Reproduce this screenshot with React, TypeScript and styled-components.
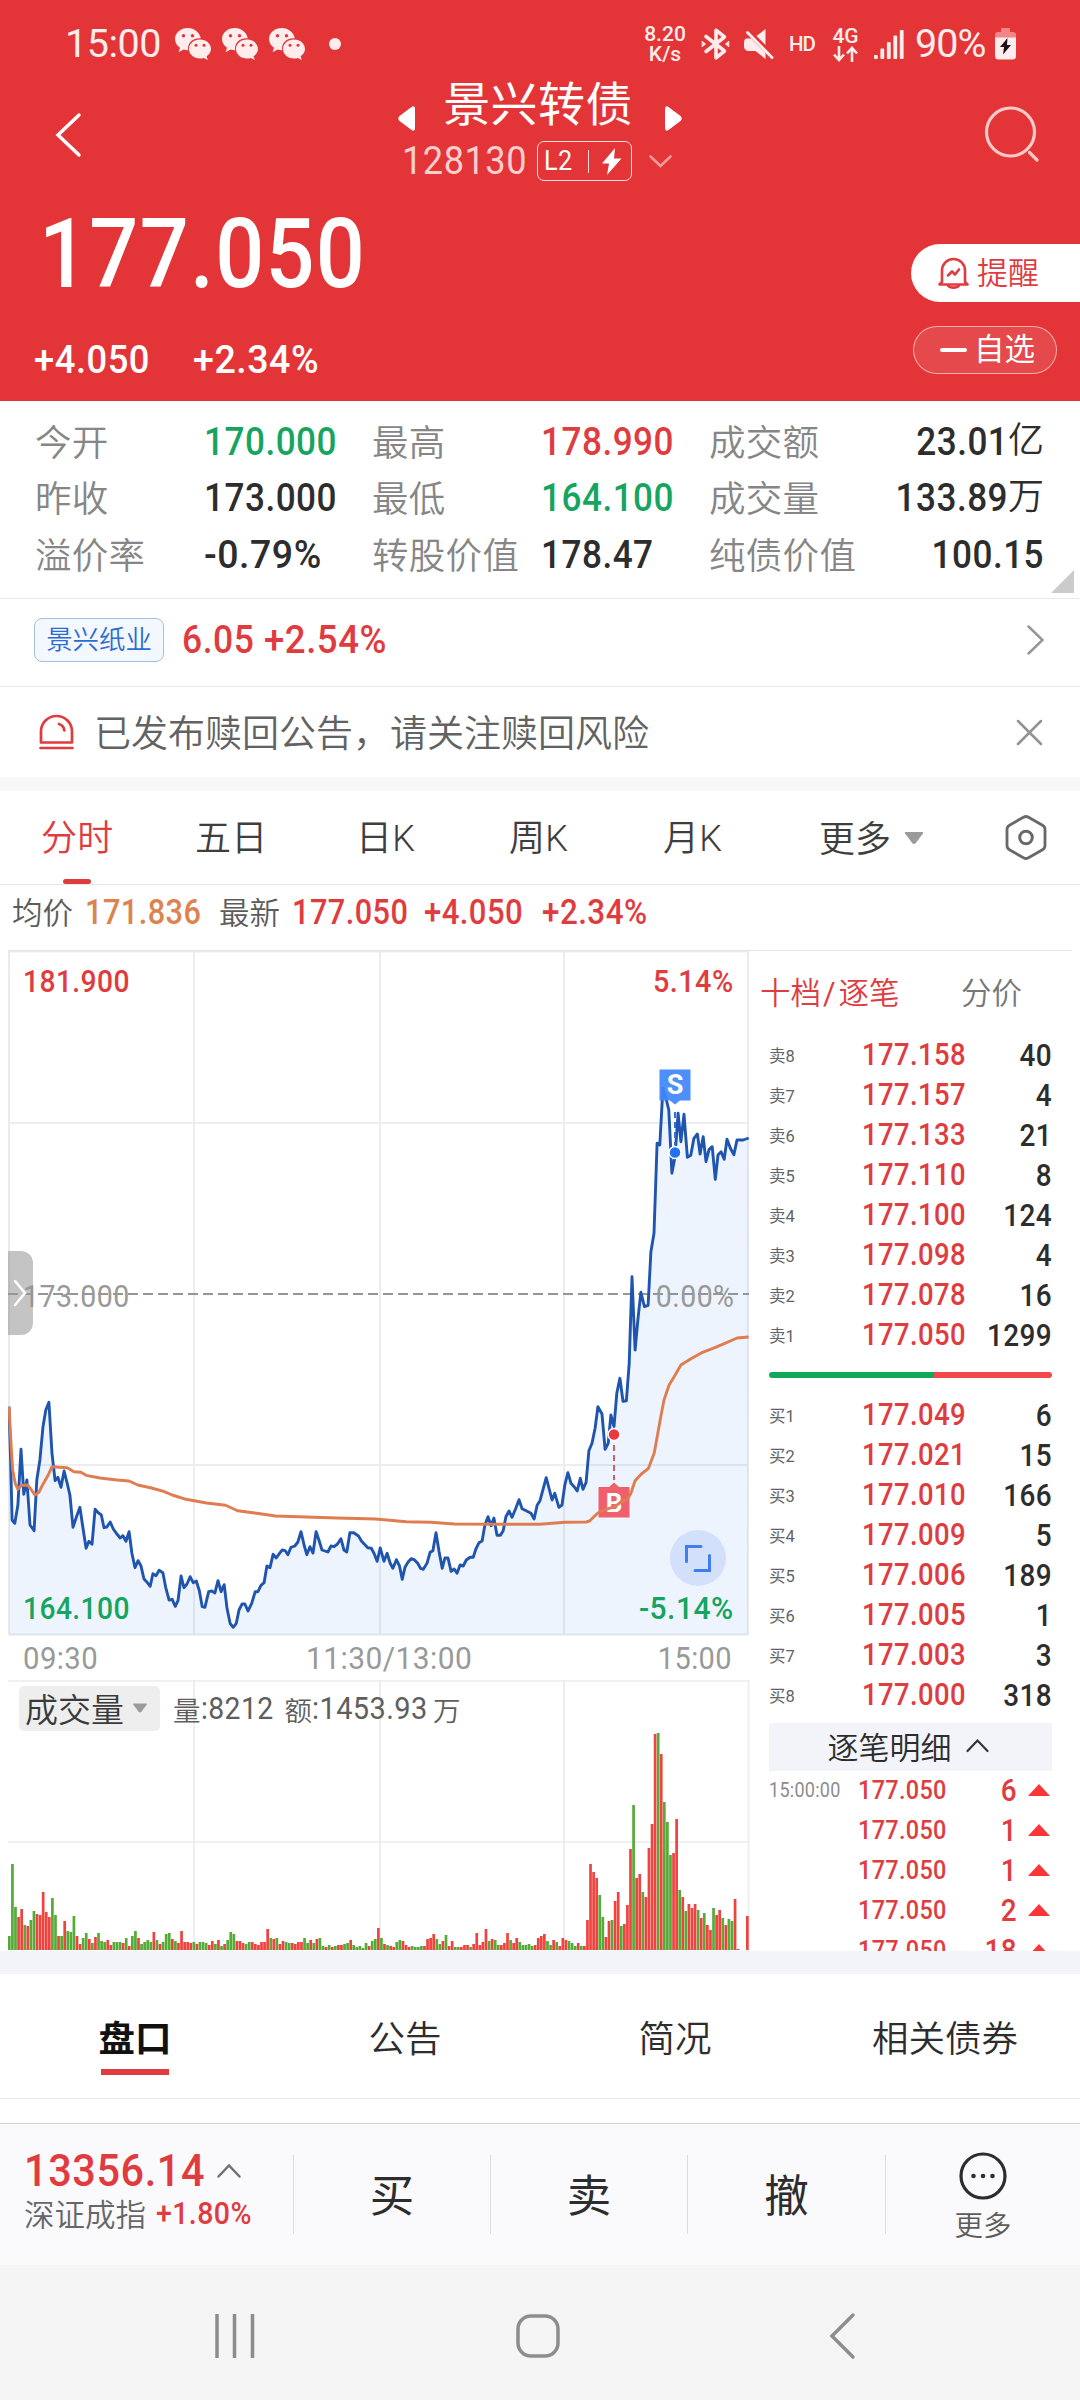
import React from "react";
import styled, { createGlobalStyle } from "styled-components";

const RED = "#e03c40";
const GREEN = "#17a45f";
const INK = "#2d2d2d";

const Global = createGlobalStyle`
  * { box-sizing: border-box; }
  body {
    margin: 0;
    background: #fff;
    font-family: Roboto, "Noto Sans CJK SC", sans-serif;
    font-weight: 350;
  }
  svg { display: block; flex: none; overflow: visible; }
`;

const Screen = styled.div`
  width: 1080px;
  height: 2400px;
  display: flex;
  flex-direction: column;
  overflow: hidden;
  background: #fff;
`;

/* Condensed figures: the box keeps its own width, the glyphs are narrowed inside it. */
const Num = styled.span<{ $size: number; $w?: number; $color?: string; $right?: boolean; $weight?: number; $sx?: number }>`
  display: inline-flex;
  justify-content: ${(p) => (p.$right ? "flex-end" : "flex-start")};
  flex: none;
  width: ${(p) => (p.$w ? p.$w + "px" : "auto")};
  font-size: ${(p) => p.$size}px;
  font-weight: ${(p) => p.$weight ?? 500};
  color: ${(p) => p.$color ?? "inherit"};
  letter-spacing: 0.0145em;
  line-height: 1;
  white-space: pre;
  transform: scaleX(${(p) => p.$sx ?? 0.9});
  transform-origin: ${(p) => (p.$right ? "right" : "left")} center;
`;

/* ---------- header ---------- */
const Header = styled.header`
  height: 401px;
  flex: none;
  background: #e33537;
  color: #fff;
  display: flex;
  flex-direction: column;
`;
const StatusBar = styled.div`
  height: 80px;
  flex: none;
  display: flex;
  align-items: center;
  justify-content: space-between;
  padding: 8px 64px 0 65px;
  color: #ffecec;
`;
const StatusGroup = styled.div<{ $gap: number }>`
  display: flex;
  align-items: center;
  gap: ${(p) => p.$gap}px;
`;
const Clock = styled.span`
  font-size: 39.5px;
  font-weight: 400;
  line-height: 1;
  width: 99px;
  letter-spacing: -0.5px;
`;
const StatusDot = styled.i`
  width: 12px;
  height: 12px;
  border-radius: 50%;
  background: #ffecec;
  margin-left: 13px;
`;
const Stack = styled.div<{ $w: number }>`
  width: ${(p) => p.$w}px;
  display: flex;
  flex-direction: column;
  align-items: center;
  font-size: 21px;
  font-weight: 500;
  line-height: 20px;
`;
const Hd = styled.span`
  width: 28px;
  font-size: 20.5px;
  font-weight: 500;
  letter-spacing: -1px;
`;
const Battery = styled.span`
  width: 72px;
  margin-left: -4px;
  font-size: 39.5px;
  font-weight: 400;
  line-height: 1;
  letter-spacing: -1px;
`;
const TitleBar = styled.div`
  height: 112px;
  display: flex;
  justify-content: space-between;
  padding: 0 40px 0 55px;
`;
const TitleBlock = styled.div`
  width: 287px;
  margin-left: 18px;
  display: flex;
  flex-direction: column;
`;
const TitleLine = styled.div`
  height: 50px;
  display: flex;
  justify-content: space-between;
  padding: 0 3px 0 0;
`;
const Title = styled.h1`
  margin: 0 4px 0 0;
  font-size: 47px;
  font-weight: 400;
  line-height: 50px;
  letter-spacing: 0.4px;
`;
const CodeLine = styled.div`
  height: 40px;
  margin-top: 11px;
  padding-left: 4px;
  display: flex;
  align-items: center;
  color: #fccfcf;
`;
const LevelBadge = styled.div`
  width: 95px;
  height: 40px;
  margin-right: 17px;
  padding: 0 9px 0 6px;
  border: 1.5px solid #ffdede;
  border-radius: 7px;
  display: flex;
  align-items: center;
  justify-content: space-between;
  color: #fff;
  font-size: 28px;
  font-weight: 500;
`;
const BadgeRule = styled.i`
  width: 1px;
  height: 23px;
  background: #ffdede;
`;
const BackSlot = styled.div`
  padding-top: 33px;
`;
const SearchSlot = styled.div`
  padding-top: 26px;
`;
const Quote = styled.div`
  flex: 1;
  display: flex;
  justify-content: space-between;
`;
const Price = styled.div`
  display: flex;
  flex-direction: column;
  padding: 14px 0 0 34px;
`;
const PriceLine = styled.div`
  display: flex;
  padding-left: 5px;
`;
const Changes = styled.div`
  display: flex;
  margin-top: 37px;
`;
const Actions = styled.div`
  width: 169px;
  padding-top: 52px;
  display: flex;
  flex-direction: column;
`;
const RemindButton = styled.button`
  height: 58px;
  border: 0;
  padding: 0 0 0 27px;
  border-radius: 29px 0 0 29px;
  background: #fff;
  color: ${RED};
  display: flex;
  align-items: center;
  gap: 8px;
  font: 350 31px/1 Roboto, "Noto Sans CJK SC", sans-serif;
`;
const WatchButton = styled.button`
  width: 144px;
  height: 48px;
  margin: 24px 0 0 2px;
  border: 1px solid rgba(255, 255, 255, 0.55);
  border-radius: 24px;
  background: rgba(255, 255, 255, 0.1);
  color: #fff;
  display: flex;
  align-items: center;
  gap: 7px;
  padding: 0 0 0 26px;
  font: 400 30.5px/1 Roboto, "Noto Sans CJK SC", sans-serif;
`;
const Dash = styled.i`
  width: 27px;
  height: 3.5px;
  border-radius: 2px;
  background: #fff;
`;

/* ---------- key figures ---------- */
const Stats = styled.section`
  position: relative;
  height: 198px;
  flex: none;
  display: grid;
  grid-template-columns: 169px 168px 169px 168px 160px 175px;
  grid-auto-rows: 56.3px;
  align-items: center;
  padding: 13px 0 0 35px;
  border-bottom: 1.5px solid #e9e9e9;
`;
const StatLabel = styled.span`
  padding-bottom: 3px;
  font-size: 36.5px;
  color: #868686;
  white-space: nowrap;
  letter-spacing: 0.3px;
`;
const StatValue = styled.span<{ $right?: boolean }>`
  padding-top: 1px;
  display: flex;
  align-items: center;
  justify-content: ${(p) => (p.$right ? "flex-end" : "flex-start")};
`;
const Unit = styled.span`
  padding-bottom: 4px;
  font-size: 36px;
  line-height: 48px;
  color: ${INK};
`;
const Corner = styled.i`
  position: absolute;
  right: 6px;
  bottom: 5px;
  border-left: 23px solid transparent;
  border-bottom: 23px solid #cbcbcb;
`;

/* ---------- linked stock + notice ---------- */
const LinkRow = styled.section`
  height: 88px;
  flex: none;
  display: flex;
  align-items: center;
  padding: 0 36px 5px 34px;
  border-bottom: 1.5px solid #e9e9e9;
`;
const StockTag = styled.span`
  width: 130px;
  height: 44px;
  margin-right: 18px;
  border: 1.5px solid #a4c0e0;
  border-radius: 8px;
  background: #f3f8fe;
  color: #2d6cd2;
  font-size: 26.4px;
  line-height: 42px;
  text-align: center;
`;
const Spacer = styled.span`
  flex: 1;
`;
const Notice = styled.section`
  height: 90px;
  flex: none;
  display: flex;
  align-items: center;
  padding: 0 38px 0 39px;
  color: #626262;
  font-size: 37px;
`;
const NoticeText = styled.span`
  flex: 1;
  margin-left: 20px;
  padding-bottom: 3px;
`;
const Band = styled.div<{ $h: number; $bg: string }>`
  height: ${(p) => p.$h}px;
  flex: none;
  background: ${(p) => p.$bg};
`;

/* ---------- period tabs ---------- */
const PeriodTabs = styled.nav`
  height: 94px;
  flex: none;
  display: flex;
  align-items: stretch;
  padding-left: 41px;
  border-bottom: 1.5px solid #e6e6e6;
  font-size: 36px;
  color: #3e3e3e;
`;
const PeriodTab = styled.span<{ $w: number; $active?: boolean }>`
  width: ${(p) => p.$w}px;
  display: flex;
  flex-direction: column;
  padding-top: 2px;
  line-height: 92px;
  color: ${(p) => (p.$active ? RED : "inherit")};
  letter-spacing: 0.3px;
  &::after {
    content: "";
    display: ${(p) => (p.$active ? "block" : "none")};
    width: 28px;
    height: 5px;
    margin: -6px 0 0 22px;
    border-radius: 2.5px;
    background: ${RED};
  }
`;
const MoreTab = styled.span`
  width: 186px;
  display: flex;
  align-items: center;
  gap: 13px;
`;
const MoreTabText = styled.span`
  padding-bottom: 3px;
`;
const HexSlot = styled.span`
  display: flex;
  align-items: center;
`;
const Legend = styled.div`
  height: 65px;
  flex: none;
  display: flex;
  align-items: center;
  padding: 0 0 10px 12px;
  font-size: 30.5px;
  color: #5c5c5c;
`;
const LegendLabel = styled.span<{ $w: number }>`
  width: ${(p) => p.$w}px;
  padding-bottom: 3px;
`;

/* ---------- chart area ---------- */
const Market = styled.section`
  height: 1001px;
  flex: none;
  margin: 0 8px;
  display: flex;
  border-top: 1.5px solid #e6e6e6;
  overflow: hidden;
`;
const ChartColumn = styled.div`
  width: 741px;
  display: flex;
  flex-direction: column;
`;
const PriceChart = styled.div`
  position: relative;
  height: 684px;
  margin-top: -1px;
`;
const ChartLabel = styled.div<{ $top: number; $side: "left" | "right" }>`
  position: absolute;
  top: ${(p) => p.$top}px;
  ${(p) => p.$side}: 15px;
  line-height: 1;
  display: flex;
`;
const Drawer = styled.div`
  position: absolute;
  left: 0;
  top: 301px;
  width: 25px;
  height: 84px;
  border-radius: 0 12px 12px 0;
  background: rgba(150, 150, 150, 0.56);
  display: flex;
  align-items: center;
  padding-left: 6px;
`;
const ExpandButton = styled.div`
  position: absolute;
  left: 662px;
  top: 580px;
  width: 56px;
  height: 56px;
  border-radius: 50%;
  background: #d2e0fb;
  display: flex;
  align-items: center;
  justify-content: center;
`;
const TimeAxis = styled.div`
  height: 46px;
  display: flex;
  align-items: center;
  padding: 3px 17px 0 15px;
`;
const VolumePane = styled.div`
  position: relative;
  height: 271px;
`;
const VolumeHead = styled.div`
  position: absolute;
  left: 11px;
  top: 6px;
  height: 45px;
  display: flex;
  align-items: center;
  color: #5e5e5e;
  font-size: 27.5px;
`;
const VolumePick = styled.span`
  width: 141px;
  height: 45px;
  margin-right: 13px;
  padding: 0 0 2px 6px;
  border-radius: 5px;
  background: #eeeeef;
  color: #3a3a3a;
  font-size: 33px;
  display: flex;
  align-items: center;
  gap: 9px;
`;

/* ---------- order book ---------- */
const Book = styled.aside`
  flex: 1;
  display: flex;
  flex-direction: column;
  padding: 0 20px 0 20px;
`;
const BookTabs = styled.div`
  height: 84px;
  flex: none;
  display: flex;
  align-items: center;
  margin-left: -9px;
  padding-bottom: 4px;
  font-size: 30.5px;
  color: #777;
`;
const BookTab = styled.span<{ $active?: boolean; $w: number }>`
  width: ${(p) => p.$w}px;
  white-space: nowrap;
  color: ${(p) => (p.$active ? RED : "inherit")};
`;
const Slash = styled.span`
  margin: 0 3px 0 2px;
  font-weight: 400;
`;
const BookRow = styled.div`
  height: 40px;
  flex: none;
  display: flex;
  align-items: center;
`;
const Level = styled.span`
  width: 93px;
  font-size: 16.5px;
  font-weight: 400;
  color: #636363;
`;
const Ratio = styled.div`
  height: 6px;
  flex: none;
  margin: 17px 0;
  display: flex;
  border-radius: 3px;
  overflow: hidden;
`;
const RatioPart = styled.i<{ $grow: number; $bg: string }>`
  flex: ${(p) => p.$grow};
  background: ${(p) => p.$bg};
`;
const TickHead = styled.div`
  height: 48px;
  flex: none;
  margin: 8px 0 -1px;
  padding: 0 5px 4px 0;
  background: #f3f4f9;
  color: ${INK};
  font-size: 31px;
  display: flex;
  align-items: center;
  justify-content: center;
  gap: 14px;
`;
const Up = styled.i`
  margin: 0 2px 0 11px;
  border: 11px solid transparent;
  border-top: 0;
  border-bottom: 12px solid #fa3437;
`;

/* ---------- lower tabs ---------- */
const InfoTabs = styled.nav`
  height: 125px;
  flex: none;
  display: grid;
  grid-template-columns: repeat(4, 1fr);
  border-bottom: 1.5px solid #ececec;
`;
const InfoTab = styled.span<{ $active?: boolean }>`
  display: flex;
  flex-direction: column;
  align-items: center;
  padding-top: 41px;
  font-size: 36.5px;
  line-height: 50px;
  color: ${(p) => (p.$active ? "#111" : INK)};
  font-weight: ${(p) => (p.$active ? 700 : 350)};
  &::after {
    content: "";
    display: ${(p) => (p.$active ? "block" : "none")};
    width: 68px;
    height: 6px;
    margin-top: 4px;
    background: ${RED};
  }
`;

/* ---------- trade bar ---------- */
const TradeBar = styled.footer`
  height: 142px;
  flex: none;
  margin-top: 24px;
  border-top: 1.5px solid #d3d3d3;
  background: #fafafc;
  display: flex;
  align-items: center;
`;
const IndexBox = styled.div`
  width: 293px;
  padding: 0 0 6px 24px;
`;
const IndexLine = styled.div<{ $h: number }>`
  height: ${(p) => p.$h}px;
  display: flex;
  align-items: center;
  font-size: 30.5px;
  color: #66666a;
`;
const IndexName = styled.span`
  width: 132px;
  padding-bottom: 2px;
`;
const TradeButton = styled.div<{ $w: number }>`
  width: ${(p) => p.$w}px;
  height: 79px;
  border-left: 1.5px solid #dcdcde;
  display: flex;
  flex-direction: column;
  align-items: center;
  justify-content: center;
  padding-bottom: 5px;
  font-size: 44.5px;
  font-weight: 400;
  color: ${INK};
`;
const MoreLabel = styled.span`
  margin: 8px 0 -14px;
  font-size: 28.5px;
  font-weight: 350;
  line-height: 38px;
  color: #5c5c5c;
`;
const SystemNav = styled.div`
  flex: 1;
  background: #f5f5f5;
  display: grid;
  grid-template-columns: 301px 313px 1fr;
  align-items: center;
  padding: 7px 0 0 215px;
`;

/* ---------- icons ---------- */
const WeChat = () => (
  <svg width="36" height="32" viewBox="0 0 36 32">
    <path d="M13 0C5.800 0 0 4.800 0 11c0 3.600 2 6.700 5 8.700L3.600 24.200l5-2.600c1.500.4 3 .6 4.600.6C12 14.500 18 9.800 25.800 10.200 24.600 4.300 19.300 0 13 0z" fill="#ffecec" />
    <path d="M25 11.500c-6.200 0-11 4.200-11 9.500s4.800 9.500 11 9.500c1.300 0 2.600-.2 3.800-.6l4 2-1.200-3.600c2.700-1.800 4.400-4.400 4.400-7.300 0-5.300-4.900-9.500-11-9.500z" fill="#ffecec" />
    <g fill="#e33537">
      <circle cx="8.500" cy="7.800" r="1.700" /><circle cx="17.500" cy="7.800" r="1.700" />
      <circle cx="21" cy="17.300" r="1.500" /><circle cx="29" cy="17.300" r="1.500" />
    </g>
  </svg>
);
const Bluetooth = () => (
  <svg width="27" height="32" viewBox="0 0 27 32" fill="none" stroke="#ffecec" strokeWidth="3.600" strokeLinejoin="round" strokeLinecap="round">
    <path d="M4 8.500L22.500 23 14 29.800V2.200L22.500 9 4 23.500" />
    <path d="M.5 13.500l3 2.500-3 2.500zM26.500 13.500l-3 2.500 3 2.500z" strokeWidth="1" fill="#ffecec" />
  </svg>
);
const Mute = () => (
  <svg width="30" height="31" viewBox="0 0 30 31">
    <path d="M2.500 9.500H7L21.500 24v6L11.500 22h-7C2 22 0 20 0 17.500V14c0-2.500 1-4.500 2.500-4.500zM12.500 7L21.500 0v16z" fill="#ffecec" />
    <path d="M3.500 3.500L28 28.500" stroke="#ffecec" strokeWidth="3" strokeLinecap="round" />
  </svg>
);
const DataArrows = () => (
  <svg width="25" height="16" viewBox="0 0 25 16" fill="none" stroke="#ffecec" strokeWidth="2.600">
    <path d="M6 0v14M1 8.500L6 14l5-5.500M19 16V2M14 7.500L19 2l5 5.500" />
  </svg>
);
const Signal = () => (
  <svg width="30" height="29" viewBox="0 0 30 29" fill="#ffecec">
    <rect x="0" y="25" width="3.800" height="4" rx="1" /><rect x="6.400" y="18.500" width="3.800" height="10.500" rx="1" />
    <rect x="12.900" y="12" width="3.800" height="17" rx="1" /><rect x="19.400" y="5.500" width="3.800" height="23.500" rx="1" />
    <rect x="25.800" y="0" width="3.800" height="29" rx="1" />
  </svg>
);
const BatteryIcon = () => (
  <svg width="21" height="32" viewBox="0 0 21 32">
    <path d="M6 0h9v4h3a3 3 0 0 1 3 3v3H0V7a3 3 0 0 1 3-3h3z" fill="#f28586" />
    <path d="M0 9.500h21V28a3.500 3.500 0 0 1-3.500 3.500h-14A3.500 3.500 0 0 1 0 28z" fill="#ffecec" />
    <path d="M12.500 10L5 19h4l-1 7.500L16 17h-4z" fill="#1d1214" />
  </svg>
);
const Bell = () => (
  <svg width="31" height="33" viewBox="0 0 31 33" fill="none" stroke={RED} strokeWidth="2.600" strokeLinejoin="round" strokeLinecap="round">
    <path d="M4 25V13.500a11.500 11.500 0 0 1 23 0V25l2.500 2.500h-28z" />
    <path d="M10 28.500a6 3.600 0 0 0 11 0" />
    <path d="M10 18.500l4-4 3 3 4-5" />
  </svg>
);
const Siren = () => (
  <svg width="35" height="36" viewBox="0 0 35 36" fill="none" stroke={RED} strokeWidth="2.700" strokeLinecap="round" strokeLinejoin="round">
    <path d="M2 28.500V17.500a15.500 15.500 0 0 1 31 0v11zM1.500 34h32M20 10c3 1 5 3 5.300 6.500" />
  </svg>
);
const Chevron = ({ w, h, d, color, sw = 2.500 }: { w: number; h: number; d: string; color: string; sw?: number }) => (
  <svg width={w} height={h} viewBox={`0 0 ${w} ${h}`} fill="none" stroke={color} strokeWidth={sw} strokeLinecap="round">
    <path d={d} />
  </svg>
);
const Caret = ({ w, h }: { w: number; h: number }) => (
  <svg width={w} height={h} viewBox="0 0 20 13">
    <path d="M1 0h18q1.500 0 .7 1.500L12 12q-2 2-4 0L.3 1.500Q-.5 0 1 0z" fill="#9b9b9b" />
  </svg>
);

/* ---------- data ---------- */
/* Intraday samples, two numbers per minute, on the chart's fine grid. */
const PRICE = `26 530 31 700 35 870 43 880 52 825 61 658 69 793 78 750 87 885 99 902 107 750 116 690 125 590 133 540 142 517 151 670 160 752 168 742 177 772 186 723 195 760 203 795 212 892 222 860 232 832 241 895 250 955 258 934 267 943 276 838 285 848 294 855 302 893 310 891 320 876 329 897 340 913 349 924 357 917 366 934 375 905 383 970 392 1013 401 992 409 1007 418 1047 427 1057 436 1069 444 1031 453 1037 462 1021 473 1028 481 1072 491 1110 500 1108 509 1129 517 1112 526 1038 534 1073 543 1062 552 1040 561 1058 570 1053 579 1083 587 1130 595 1132 606 1085 615 1083 624 1089 633 1052 642 1085 651 1064 659 1135 668 1180 677 1192 686 1180 694 1140 703 1122 711 1122 720 1143 731 1120 741 1085 749 1085 758 1066 767 1058 775 1008 784 1013 793 973 802 984 811 971 819 960 828 962 836 974 845 952 856 948 865 936 874 905 883 945 891 974 900 950 909 969 918 905 926 930 935 960 952 966 961 948 970 950 980 942 990 926 999 960 1007 966 1016 908 1027 908 1041 918 1050 934 1068 953 1078 955 1086 970 1095 994 1104 954 1115 994 1124 970 1133 1000 1141 1015 1151 989 1160 1008 1168 1048 1176 1012 1185 996 1194 986 1203 989 1213 1000 1221 1015 1229 1018 1240 1000 1249 967 1257 962 1266 908 1275 965 1284 1015 1292 984 1301 984 1310 1024 1319 1017 1327 1030 1336 1005 1345 1008 1354 990 1365 982 1374 982 1382 957 1391 938 1400 933 1408 885 1417 860 1426 887 1434 864 1443 916 1453 916 1461 902 1469 860 1478 843 1487 862 1498 834 1507 809 1516 836 1525 841 1542 850 1551 867 1560 825 1568 812 1586 743 1603 810 1611 790 1623 832 1632 825 1640 765 1649 728 1658 760 1667 770 1676 783 1685 745 1693 778 1702 757 1710 662 1719 640 1728 595 1736 530 1748 552 1757 658 1766 640 1774 555 1783 590 1791 490 1800 445 1809 514 1819 512 1827 400 1835 140 1844 360 1853 260 1861 187 1871 230 1882 226 1890 65 1899 10 1908 -260 1916 -255 1925 -425 1934 -395 1942 -360 1951 -170 1960 -220 1969 -350 1977 -265 1986 -347 1996 -218 2006 -224 2015 -275 2025 -288 2033 -228 2042 -280 2050 -205 2059 -242 2068 -250 2077 -152 2085 -225 2094 -235 2103 -212 2111 -272 2121 -245 2131 -226 2140 -270 2158 -270 2174 -276`;
const AVERAGE = `26 530 32 640 37 720 44 760 52 778 62 766 80 765 90 778 101 795 113 787 122 768 140 735 151 710 195 713 215 725 235 727 250 736 290 744 340 750 375 753 400 765 440 774 475 784 500 795 540 808 600 819 655 826 690 842 740 849 800 858 890 861 980 864 1090 867 1180 875 1250 877 1320 882 1568 883 1640 877 1702 876 1712 873 1735 850 1760 838 1785 830 1805 815 1822 808 1832 790 1844 752 1862 732 1883 715 1900 668 1910 610 1918 565 1928 510 1943 465 1960 436 1977 405 2005 387 2040 367 2070 355 2105 340 2140 324 2174 321`;
const VOLUME = `g14 g86 g43 r33 r41 g25 r24 g30 g39 r36 r35 r58 r38 r33 g52 g35 r14 g14 r29 g19 g18 g34 r14 r6 g12 g17 r11 g7 r13 g17 g9 g8 r10 r5 g8 g8 g8 r7 g12 r4 g14 g19 r12 g6 g8 g10 g8 r18 g10 r6 g8 g16 g17 r11 g9 r7 r19 r8 r8 r7 g8 r6 g8 g8 g7 r5 r9 g6 r10 g4 r6 g10 g18 g16 r9 r9 r7 g6 g8 r8 r6 r5 r8 r8 r21 g12 r11 g12 r6 r9 g8 g7 r7 r6 r8 r8 g12 g7 r10 g7 r11 g12 g4 r3 g5 r3 g4 r5 r5 g6 g7 r10 g5 g3 g4 g2 g7 r4 g9 g11 r22 g12 r6 g5 r4 r3 g8 g10 r9 r5 r3 g4 g3 g3 g4 r4 r11 r12 r16 g11 g6 r9 g15 r4 r9 g3 g3 r3 r5 r5 g3 r6 r17 r5 r8 r21 g9 r11 g10 g5 r5 r7 r17 g10 r7 r12 g8 g5 g5 g6 g4 r5 r12 r14 r16 g9 g5 r10 g8 r4 r12 r10 g9 g7 g4 r7 g4 r4 r30 r86 r78 r72 g55 g33 r13 r29 g30 r49 r58 g24 r26 r45 r101 g145 r72 r76 g58 r53 r102 r126 r216 g217 r196 g148 g128 g95 r97 r131 g60 r53 g39 r46 r42 r46 g40 r32 g37 r25 r20 g42 r35 r40 g32 r25 g31 g29 r51 r1 r0 r0 r34`;

const toPoints = (series: string) => {
  const n = series.split(" ").map(Number);
  const out: string[] = [];
  for (let i = 0; i < n.length; i += 2) out.push(`${(n[i] / 2.9037).toFixed(1)},${(1230 + n[i + 1] / 3).toFixed(1)}`);
  return out.join(" ");
};

const stats: [string, string, string?, string?][] = [
  ["今开", "170.000", GREEN], ["最高", "178.990", RED], ["成交额", "23.01", INK, "亿"],
  ["昨收", "173.000"], ["最低", "164.100", GREEN], ["成交量", "133.89", INK, "万"],
  ["溢价率", "-0.79%"], ["转股价值", "178.47"], ["纯债价值", "100.15", INK, ""],
];
const asks = [["卖8", "177.158", "40"], ["卖7", "177.157", "4"], ["卖6", "177.133", "21"], ["卖5", "177.110", "8"], ["卖4", "177.100", "124"], ["卖3", "177.098", "4"], ["卖2", "177.078", "16"], ["卖1", "177.050", "1299"]];
const bids = [["买1", "177.049", "6"], ["买2", "177.021", "15"], ["买3", "177.010", "166"], ["买4", "177.009", "5"], ["买5", "177.006", "189"], ["买6", "177.005", "1"], ["买7", "177.003", "3"], ["买8", "177.000", "318"]];
const ticks = [["15:00:00", "6"], ["", "1"], ["", "1"], ["", "2"], ["", "18"]];

const PriceDrawing = () => (
  <svg width="741" height="685" viewBox="8 950 741 685">
    <rect x="9" y="951.500" width="739" height="683" fill="none" stroke="#ebebed" strokeWidth="2" />
    <path d="M194 951V1635M380 951V1635M564 951V1635M9 1123H748M9 1465H748" stroke="#ededef" strokeWidth="2" />
    <path d="M8 1294H749" stroke="#969696" strokeWidth="2" strokeDasharray="10 5" />
    <polygon points={`${toPoints(PRICE)} 748,1635 9,1635`} fill="#5a8ff0" fillOpacity=".1" />
    <polyline points={toPoints(PRICE)} fill="none" stroke="#1f55ae" strokeWidth="2.900" strokeLinejoin="round" />
    <path d="M675 1112V1145" stroke="#2f6fe0" strokeWidth="2" strokeDasharray="6 4" />
    <path d="M659.500 1069.500h31v31h-10.500l-5 4-5-4h-10.500z" fill="#3f86fb" fillOpacity=".93" />
    <text x="675" y="1094" textAnchor="middle" fill="#fff" fontSize="27" fontWeight="700" fontFamily="Roboto">S</text>
    <circle cx="675" cy="1152.500" r="6" fill="#2272f3" stroke="#fff" strokeWidth="1.500" />
    <path d="M614 1445V1480" stroke="#d45a70" strokeWidth="2" strokeDasharray="6 4" />
    <path d="M598.500 1487h10.500l5-4.500 5 4.500h10.500v30.500h-31z" fill="#f0606c" />
    <text x="614" y="1512" textAnchor="middle" fill="#fff" fontSize="26" fontWeight="700" fontFamily="Roboto">B</text>
    <circle cx="614" cy="1434.500" r="6" fill="#ee3840" stroke="#fff" strokeWidth="1.500" />
    <polyline points={toPoints(AVERAGE)} fill="none" stroke="#e07d50" strokeWidth="2.900" strokeLinejoin="round" />
  </svg>
);

const VolumeDrawing = () => (
  <svg width="741" height="271" viewBox="8 1680 741 271">
    <path d="M8 1681H749M8 1842H749" stroke="#f0f0f1" strokeWidth="2" />
    <path d="M194 1680V1951M380 1680V1951M564 1680V1951M748.500 1680V1951" stroke="#ededef" strokeWidth="1.800" />
    {VOLUME.split(" ").map((v, i) => {
      const h = Number(v.slice(1));
      return <rect key={i} x={8 + i * 3.075} y={1950 - h} width="2.700" height={h} fill={v[0] === "g" ? "#55ab37" : "#ef4340"} />;
    })}
  </svg>
);

const BookRows = ({ rows }: { rows: string[][] }) => (
  <>
    {rows.map(([level, price, qty]) => (
      <BookRow key={level}>
        <Level>{level}</Level>
        <Num $size={30.500} $w={110} $color={RED}>{price}</Num>
        <Spacer />
        <Num $size={31} $w={70} $color={INK} $right>{qty}</Num>
      </BookRow>
    ))}
  </>
);

export default function App() {
  return (
    <Screen>
      <Global />
      <Header>
        <StatusBar>
          <StatusGroup $gap={11}>
            <Clock>15:00</Clock>
            <WeChat /><WeChat /><WeChat />
            <StatusDot />
          </StatusGroup>
          <StatusGroup $gap={15}>
            <Stack $w={44}><span>8.20</span><span>K/s</span></Stack>
            <Bluetooth /><Mute />
            <Hd>HD</Hd>
            <Stack $w={27}><span>4G</span><DataArrows /></Stack>
            <Signal />
            <StatusGroup $gap={8}><Battery>90%</Battery><BatteryIcon /></StatusGroup>
          </StatusGroup>
        </StatusBar>
        <TitleBar>
          <BackSlot><Chevron w={26} h={44} d="M24 2L3 22L24 42" color="#fff" sw={3.500} /></BackSlot>
          <TitleBlock>
            <TitleLine>
              <svg width="17" height="50" viewBox="0 0 17 50"><path d="M17 29v19q0 4-3.500 2L1.500 41q-2.500-2.500 0-5L13.500 27q3.500-2 3.500 2z" fill="#fff" /></svg>
              <Title>景兴转债</Title>
              <svg width="17" height="50" viewBox="0 0 17 50"><path d="M0 29v19q0 4 3.500 2l12-9q2.500-2.500 0-5L3.500 27q-3.500-2-3.500 2z" fill="#fff" /></svg>
            </TitleLine>
            <CodeLine>
              <Num $size={39.500} $w={135} $weight={400} $sx={0.915}>128130</Num>
              <LevelBadge>
                <Num $size={28} $w={30} $weight={400}>L2</Num><BadgeRule />
                <svg width="20" height="27" viewBox="0 0 20 27"><path d="M13 0L0 15.500h7L5 27 19.500 10.500H12z" fill="#fff" /></svg>
              </LevelBadge>
              <Chevron w={23} h={13} d="M1.500 1.500L11.500 11L21.500 1.500" color="#f49a9b" sw={2.600} />
            </CodeLine>
          </TitleBlock>
          <SearchSlot>
            <svg width="56" height="60" viewBox="0 0 56 60" fill="none" stroke="#fdc9c9" strokeWidth="3.200" strokeLinecap="round">
              <circle cx="26.500" cy="26" r="24" /><path d="M45.500 46.500L53 54" />
            </svg>
          </SearchSlot>
        </TitleBar>
        <Quote>
          <Price>
            <PriceLine><Num $size={97} $w={340} $sx={0.89}>177.050</Num></PriceLine>
            <Changes>
              <Num $size={39.500} $w={159} $sx={0.92}>+4.050</Num>
              <Num $size={39.500} $sx={0.95}>+2.34%</Num>
            </Changes>
          </Price>
          <Actions>
            <RemindButton><Bell />提醒</RemindButton>
            <WatchButton><Dash />自选</WatchButton>
          </Actions>
        </Quote>
      </Header>

      <Stats>
        {stats.map(([label, value, color, unit]) => (
          <React.Fragment key={label}>
            <StatLabel>{label}</StatLabel>
            <StatValue $right={unit !== undefined}>
              <Num $size={39} $color={color ?? INK} $right={unit !== undefined} $sx={value.endsWith("%") ? 0.96 : 0.9}>{value}</Num>
              {unit && <Unit>{unit}</Unit>}
            </StatValue>
          </React.Fragment>
        ))}
        <Corner />
      </Stats>

      <LinkRow>
        <StockTag>景兴纸业</StockTag>
        <Num $size={38.500} $w={82} $color={RED} $sx={0.92}>6.05</Num>
        <Num $size={38.500} $color={RED} $sx={0.95}>+2.54%</Num>
        <Spacer />
        <Chevron w={17} h={30} d="M1.500 1.500L15.500 15L1.500 28.500" color="#969696" />
      </LinkRow>

      <Notice>
        <Siren />
        <NoticeText>已发布赎回公告，请关注赎回风险</NoticeText>
        <Chevron w={25} h={25} d="M1 1L24 24M24 1L1 24" color="#929292" />
      </Notice>
      <Band $h={14} $bg="#f7f7f7" />

      <PeriodTabs>
        <PeriodTab $w={154} $active>分时</PeriodTab>
        <PeriodTab $w={161}>五日</PeriodTab>
        <PeriodTab $w={153}>日K</PeriodTab>
        <PeriodTab $w={154}>周K</PeriodTab>
        <PeriodTab $w={156}>月K</PeriodTab>
        <MoreTab><MoreTabText>更多</MoreTabText><Caret w={20} h={12} /></MoreTab>
        <HexSlot>
          <svg width="42" height="45" viewBox="0 0 42 45" fill="none" stroke="#686868" strokeWidth="2.800" strokeLinejoin="round">
            <path d="M18.500 2.200q2.500-1.400 5 0l14 8q2.500 1.400 2.500 4.300v16q0 2.900-2.500 4.300l-14 8q-2.500 1.400-5 0l-14-8Q2 33.400 2 30.500v-16q0-2.900 2.500-4.300z" />
            <circle cx="21" cy="22.500" r="6.300" strokeWidth="3" />
          </svg>
        </HexSlot>
      </PeriodTabs>

      <Legend>
        <LegendLabel $w={73}>均价</LegendLabel>
        <Num $size={34.500} $w={134} $color="#dd8350" $sx={0.89}>171.836</Num>
        <LegendLabel $w={73}>最新</LegendLabel>
        <Num $size={34.500} $w={132} $color={RED} $sx={0.89}>177.050</Num>
        <Num $size={34.500} $w={118} $color={RED}>+4.050</Num>
        <Num $size={34.500} $color={RED} $sx={0.91}>+2.34%</Num>
      </Legend>

      <Market>
        <ChartColumn>
          <PriceChart>
            <PriceDrawing />
            <ChartLabel $top={16} $side="left"><Num $size={31} $color={RED} $sx={0.91}>181.900</Num></ChartLabel>
            <ChartLabel $top={16} $side="right"><Num $size={31} $color={RED} $sx={0.93} $right>5.14%</Num></ChartLabel>
            <ChartLabel $top={331} $side="left"><Num $size={31} $color="#999" $weight={400} $sx={0.92}>173.000</Num></ChartLabel>
            <ChartLabel $top={331} $side="right"><Num $size={31} $color="#999" $weight={400} $sx={0.92} $right>0.00%</Num></ChartLabel>
            <ChartLabel $top={643} $side="left"><Num $size={31} $color={GREEN} $sx={0.91}>164.100</Num></ChartLabel>
            <ChartLabel $top={643} $side="right"><Num $size={31} $color={GREEN} $sx={0.97} $right>-5.14%</Num></ChartLabel>
            <Drawer><Chevron w={12} h={26} d="M1 1L11 13L1 25" color="#fff" /></Drawer>
            <ExpandButton>
              <svg width="26" height="27" viewBox="0 0 26 27" fill="none" stroke="#3f7df0" strokeWidth="3" strokeLinecap="round">
                <path d="M1.500 16.500V1.500H16M24.500 10.500V25.500H10" />
              </svg>
            </ExpandButton>
          </PriceChart>
          <TimeAxis>
            <Num $size={31.500} $w={283} $color="#999" $weight={400} $sx={0.93}>09:30</Num>
            <Num $size={31.500} $color="#999" $weight={400} $sx={0.95}>11:30/13:00</Num>
            <Spacer />
            <Num $size={31.500} $w={80} $color="#999" $weight={400} $sx={0.92} $right>15:00</Num>
          </TimeAxis>
          <VolumePane>
            <VolumeDrawing />
            <VolumeHead>
              <VolumePick>成交量<Caret w={14} h={10} /></VolumePick>
              量<Num $size={31.500} $w={84} $weight={450}>:8212</Num>
              额<Num $size={31.500} $w={121} $weight={450} $sx={0.92}>:1453.93</Num>万
            </VolumeHead>
          </VolumePane>
        </ChartColumn>

        <Book>
          <BookTabs>
            <BookTab $w={201} $active>十档<Slash>/</Slash>逐笔</BookTab>
            <BookTab $w={70}>分价</BookTab>
          </BookTabs>
          <BookRows rows={asks} />
          <Ratio><RatioPart $grow={165} $bg="#0fa958" /><RatioPart $grow={118} $bg="#f24a4c" /></Ratio>
          <BookRows rows={bids} />
          <TickHead>逐笔明细<Chevron w={23} h={13} d="M1.500 12L11.500 1.500L21.500 12" color="#333" sw={2.200} /></TickHead>
          {ticks.map(([time, qty], i) => (
            <BookRow key={i}>
              <Num $size={20.500} $w={89} $color="#8c8c8c" $weight={400} $sx={0.88}>{time}</Num>
              <Num $size={26} $w={100} $color={RED}>177.050</Num>
              <Spacer />
              <Num $size={31} $w={50} $color={RED} $right>{qty}</Num>
              <Up />
            </BookRow>
          ))}
        </Book>
      </Market>
      <Band $h={23} $bg="#f3f4f8" />

      <InfoTabs>
        <InfoTab $active>盘口</InfoTab>
        <InfoTab>公告</InfoTab>
        <InfoTab>简况</InfoTab>
        <InfoTab>相关债券</InfoTab>
      </InfoTabs>

      <TradeBar>
        <IndexBox>
          <IndexLine $h={44}>
            <Num $size={45} $w={193} $color={RED} $sx={0.92}>13356.14</Num>
            <Chevron w={24} h={14} d="M1.500 12.500L12 1.500L22.500 12.500" color="#707070" />
          </IndexLine>
          <IndexLine $h={42}>
            <IndexName>深证成指</IndexName>
            <Num $size={31} $color={RED} $sx={0.92}>+1.80%</Num>
          </IndexLine>
        </IndexBox>
        <TradeButton $w={197}>买</TradeButton>
        <TradeButton $w={197}>卖</TradeButton>
        <TradeButton $w={198}>撤</TradeButton>
        <TradeButton $w={195}>
          <svg width="48" height="48" viewBox="0 0 48 48" fill="none" stroke="#2d2d2d" strokeWidth="3.200">
            <circle cx="24" cy="24" r="22" />
            <g fill="#2d2d2d" stroke="none"><circle cx="14.500" cy="24" r="2.300" /><circle cx="24" cy="24" r="2.300" /><circle cx="33.500" cy="24" r="2.300" /></g>
          </svg>
          <MoreLabel>更多</MoreLabel>
        </TradeButton>
      </TradeBar>

      <SystemNav>
        <svg width="39" height="44" viewBox="0 0 39 44" stroke="#8d8d8d" strokeWidth="3.500"><path d="M2 0V44M19.500 0V44M37.500 0V44" /></svg>
        <svg width="44" height="44" viewBox="0 0 44 44" fill="none" stroke="#8d8d8d" strokeWidth="3.500"><rect x="2" y="2" width="40" height="40" rx="13" /></svg>
        <Chevron w={26} h={44} d="M24 1L3 22L24 43" color="#8d8d8d" sw={3.500} />
      </SystemNav>
    </Screen>
  );
}
